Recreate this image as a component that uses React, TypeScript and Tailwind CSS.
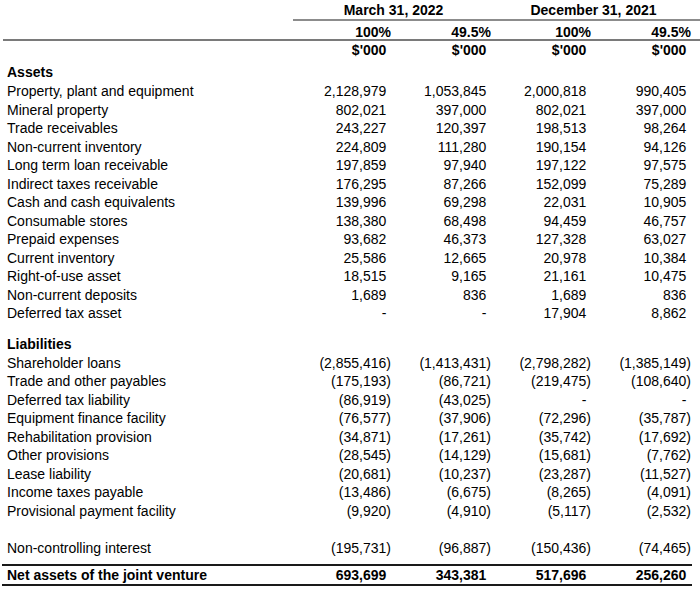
import React from "react";

type Row = [string, string, string, string, string];

const assets: Row[] = [
  ["Property, plant and equipment", "2,128,979", "1,053,845", "2,000,818", "990,405"],
  ["Mineral property", "802,021", "397,000", "802,021", "397,000"],
  ["Trade receivables", "243,227", "120,397", "198,513", "98,264"],
  ["Non-current inventory", "224,809", "111,280", "190,154", "94,126"],
  ["Long term loan receivable", "197,859", "97,940", "197,122", "97,575"],
  ["Indirect taxes receivable", "176,295", "87,266", "152,099", "75,289"],
  ["Cash and cash equivalents", "139,996", "69,298", "22,031", "10,905"],
  ["Consumable stores", "138,380", "68,498", "94,459", "46,757"],
  ["Prepaid expenses", "93,682", "46,373", "127,328", "63,027"],
  ["Current inventory", "25,586", "12,665", "20,978", "10,384"],
  ["Right-of-use asset", "18,515", "9,165", "21,161", "10,475"],
  ["Non-current deposits", "1,689", "836", "1,689", "836"],
  ["Deferred tax asset", "-", "-", "17,904", "8,862"],
];

const liabilities: Row[] = [
  ["Shareholder loans", "(2,855,416)", "(1,413,431)", "(2,798,282)", "(1,385,149)"],
  ["Trade and other payables", "(175,193)", "(86,721)", "(219,475)", "(108,640)"],
  ["Deferred tax liability", "(86,919)", "(43,025)", "-", "-"],
  ["Equipment finance facility", "(76,577)", "(37,906)", "(72,296)", "(35,787)"],
  ["Rehabilitation provision", "(34,871)", "(17,261)", "(35,742)", "(17,692)"],
  ["Other provisions", "(28,545)", "(14,129)", "(15,681)", "(7,762)"],
  ["Lease liability", "(20,681)", "(10,237)", "(23,287)", "(11,527)"],
  ["Income taxes payable", "(13,486)", "(6,675)", "(8,265)", "(4,091)"],
  ["Provisional payment facility", "(9,920)", "(4,910)", "(5,117)", "(2,532)"],
];

function Num({ v }: { v: string }) {
  const neg = v.startsWith("(");
  return (
    <div className="text-right whitespace-nowrap">
      {v}
      {!neg && <span className="invisible">)</span>}
    </div>
  );
}

function DataRow({ r, bold = false, h = "h-[18.5px] leading-[18.5px]" }: { r: Row; bold?: boolean; h?: string }) {
  return (
    <div className={`grid grid-cols-[291px_100px_100px_100px_100px] ${h} ${bold ? "font-bold" : ""}`}>
      <div className="pl-[7px] whitespace-nowrap">{r[0]}</div>
      <Num v={r[1]} />
      <Num v={r[2]} />
      <Num v={r[3]} />
      <Num v={r[4]} />
    </div>
  );
}

export default function App() {
  return (
    <div className="w-[700px] h-[592px] bg-white text-black [font-family:'Liberation_Sans',Arial,sans-serif] text-[14px] pt-[2px]">
      {/* Period headers */}
      <div className="grid grid-cols-[291px_200px_200px] h-[17px] leading-[17px] font-bold">
        <div />
        <div className="text-center pl-[5px] whitespace-nowrap">March 31, 2022</div>
        <div className="text-center pl-[5px] whitespace-nowrap">December 31, 2021</div>
      </div>
      <div className="ml-[293px] h-[2px] bg-[#8c8c8c]" />
      <div className="grid grid-cols-[291px_100px_100px_100px_100px] h-[18px] items-start pt-[5px] font-bold">
        <div />
        <div className="text-right leading-[13px]">100%</div>
        <div className="text-right leading-[13px]">49.5%</div>
        <div className="text-right leading-[13px]">100%</div>
        <div className="text-right leading-[13px]">49.5%</div>
      </div>
      <div className="ml-[3px] h-[2px] bg-[#7a7a7a]" />
      <div className="grid grid-cols-[291px_100px_100px_100px_100px] h-[19px] leading-[19px] font-bold">
        <div />
        <Num v="$'000" />
        <Num v="$'000" />
        <Num v="$'000" />
        <Num v="$'000" />
      </div>

      {/* Assets */}
      <div className="mt-[2px] h-[20px] leading-[20px] pl-[7px] font-bold">Assets</div>
      {assets.map((r) => (
        <DataRow key={r[0]} r={r} />
      ))}

      {/* Liabilities */}
      <div className="mt-[11px] h-[20px] leading-[20px] pl-[7px] font-bold">Liabilities</div>
      {liabilities.map((r) => (
        <DataRow key={r[0]} r={r} />
      ))}

      <div className="h-[18.5px]" />
      <DataRow r={["Non-controlling interest", "(195,731)", "(96,887)", "(150,436)", "(74,465)"]} />

      <div className="mt-[7px] ml-[2px] w-[690px] h-[2px] bg-[#1a1a1a]" />
      <DataRow
        r={["Net assets of the joint venture", "693,699", "343,381", "517,696", "256,260"]}
        bold
        h="h-[18px] leading-[18px]"
      />
      <div className="ml-[2px] w-[690px] h-[2px] bg-[#1a1a1a]" />
    </div>
  );
}
